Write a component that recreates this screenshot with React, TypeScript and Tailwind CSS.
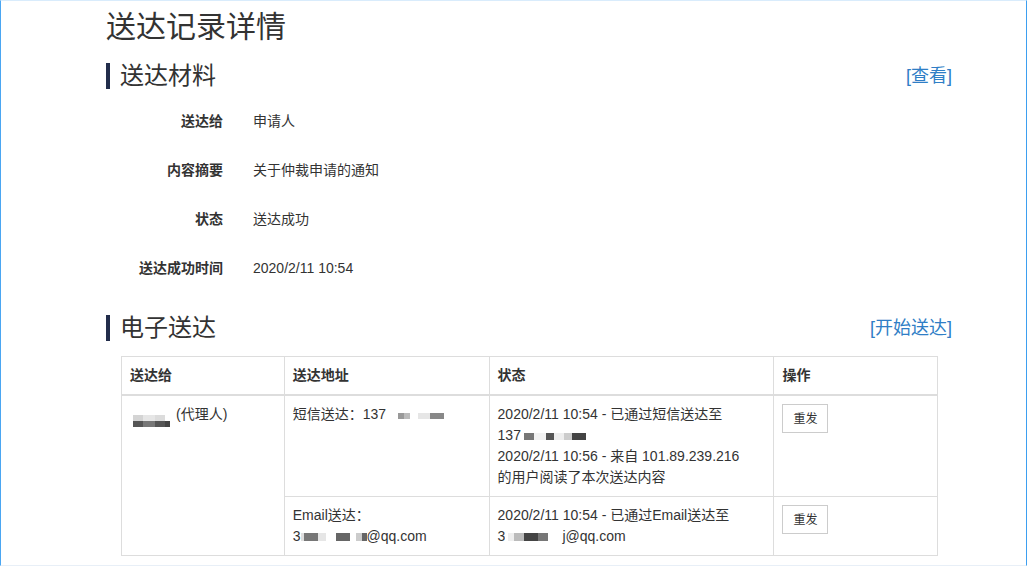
import React from "react";

type Seg = [number, string, number?];

function Blur({ segs, h = 7, offset = 0 }: { segs: Seg[]; h?: number; offset?: number }) {
  return (
    <span className="inline-flex items-end align-baseline" style={{ height: h, transform: `translateY(${offset}px)` }}>
      {segs.map((s, i) => (
        <span key={i} className="inline-block" style={{ width: s[0], height: s[2] ?? h, background: s[1] }} />
      ))}
    </span>
  );
}

function InfoRow({ label, value }: { label: string; value: string }) {
  return (
    <div className="flex h-[49px] items-center text-[14px]">
      <div className="w-[117px] text-right font-bold text-[#333]">{label}</div>
      <div className="pl-[30px] text-[#333]">{value}</div>
    </div>
  );
}

function SectionHeader({ title, link }: { title: string; link: string }) {
  return (
    <div className="flex h-[26px] items-center justify-between">
      <div className="flex items-center">
        <div className="h-[26px] w-[4px] bg-[#222d4b]" />
        <div className="ml-[10px] text-[24px] leading-[26px] text-[#333]">{title}</div>
      </div>
      <div className="text-[18px] leading-[26px] text-[#2f7ec6]">{link}</div>
    </div>
  );
}

function ResendButton() {
  return (
    <button className="h-[29px] w-[46px] border border-[#ccc] bg-white text-[12px] leading-none text-[#333]">
      重发
    </button>
  );
}

export default function App() {
  return (
    <div
      className="h-[566px] w-[1027px] overflow-hidden border-t border-r border-b border-l border-t-[#d9ecfc] border-r-[#3d9ff0] border-b-[#e8eff7] border-l-[#4aa6f2] bg-white text-[#333]"
      style={{ fontFamily: '"Liberation Sans", "Noto Sans CJK SC", sans-serif' }}
    >
      <div className="w-[951px] pl-[105px]">
        <div className="text-[30px] leading-[51px] text-[#333]">送达记录详情</div>
        <div className="mt-[11px]">
          <SectionHeader title="送达材料" link="[查看]" />
        </div>
        <div className="mt-[8px]">
          <InfoRow label="送达给" value="申请人" />
          <InfoRow label="内容摘要" value="关于仲裁申请的通知" />
          <InfoRow label="状态" value="送达成功" />
          <InfoRow label="送达成功时间" value="2020/2/11 10:54" />
        </div>
        <div className="mt-[22px]">
          <SectionHeader title="电子送达" link="[开始送达]" />
        </div>
        <div className="ml-[15px] mt-[15px]">
          <table className="w-[817px] border-collapse text-[14px] leading-[21px] text-[#333]">
            <colgroup>
              <col className="w-[163px]" />
              <col className="w-[205px]" />
              <col className="w-[285px]" />
              <col className="w-[164px]" />
            </colgroup>
            <thead>
              <tr>
                <th className="border border-b-2 border-[#ddd] px-[8px] py-[8px] text-left font-bold">送达给</th>
                <th className="border border-b-2 border-[#ddd] px-[8px] py-[8px] text-left font-bold">送达地址</th>
                <th className="border border-b-2 border-[#ddd] px-[8px] py-[8px] text-left font-bold">状态</th>
                <th className="border border-b-2 border-[#ddd] px-[8px] py-[8px] text-left font-bold">操作</th>
              </tr>
            </thead>
            <tbody>
              <tr>
                <td rowSpan={2} className="border border-[#ddd] px-[8px] py-[8px] align-top">
                  <span className="whitespace-nowrap">
                    <span className="ml-[3px] inline-flex flex-col align-[-2px]">
                      <span className="flex h-[6px]">
                        <span className="w-[10px] bg-[#d4d4d4]" />
                        <span className="w-[12px] bg-[#e6e6e6]" />
                        <span className="w-[10px] bg-[#dcdcdc]" />
                        <span className="w-[6px] bg-white" />
                      </span>
                      <span className="flex h-[6px]">
                        <span className="w-[10px] bg-[#555]" />
                        <span className="w-[12px] bg-[#777]" />
                        <span className="w-[10px] bg-[#555]" />
                        <span className="w-[5px] bg-[#444]" />
                      </span>
                    </span>
                    <span className="ml-[5px]">(代理人)</span>
                  </span>
                </td>
                <td className="border border-[#ddd] px-[8px] py-[8px] align-top">
                  <span className="whitespace-nowrap">
                    短信送达：137
                    <span className="ml-[12px]" />
                    <Blur segs={[[6, "#999"], [6, "#bbb"], [8, "#fff"], [12, "#e6e6e6"], [14, "#888"]]} h={6} />
                  </span>
                </td>
                <td className="border border-[#ddd] px-[8px] py-[8px] align-top">
                  <div className="whitespace-nowrap">2020/2/11 10:54 - 已通过短信送达至</div>
                  <div className="whitespace-nowrap">
                    137
                    <Blur segs={[[3, "#fff"], [10, "#777"], [12, "#f2f2f2"], [8, "#555"], [10, "#eee"], [8, "#ccc"], [14, "#444"]]} h={7} />
                  </div>
                  <div className="whitespace-nowrap">2020/2/11 10:56 - 来自 101.89.239.216</div>
                  <div className="whitespace-nowrap">的用户阅读了本次送达内容</div>
                </td>
                <td className="border border-[#ddd] px-[8px] py-[8px] align-top">
                  <ResendButton />
                </td>
              </tr>
              <tr>
                <td className="border border-[#ddd] px-[8px] py-[8px] align-top">
                  <div className="whitespace-nowrap">Email送达：</div>
                  <div className="whitespace-nowrap">
                    3
                    <Blur segs={[[3, "#ddd"], [14, "#777"], [8, "#e6e6e6"], [10, "#fff"], [14, "#666"], [6, "#fff"], [6, "#ccc"], [5, "#666"]]} h={8} />
                    @qq.com
                  </div>
                </td>
                <td className="border border-[#ddd] px-[8px] py-[8px] align-top">
                  <div className="whitespace-nowrap">2020/2/11 10:54 - 已通过Email送达至</div>
                  <div className="whitespace-nowrap">
                    3
                    <Blur segs={[[3, "#fff"], [6, "#eee"], [10, "#bbb"], [14, "#444"], [10, "#777"], [14, "#fff"]]} h={8} />
                    j@qq.com
                  </div>
                </td>
                <td className="border border-[#ddd] px-[8px] py-[8px] align-top">
                  <ResendButton />
                </td>
              </tr>
            </tbody>
          </table>
        </div>
      </div>
    </div>
  );
}
